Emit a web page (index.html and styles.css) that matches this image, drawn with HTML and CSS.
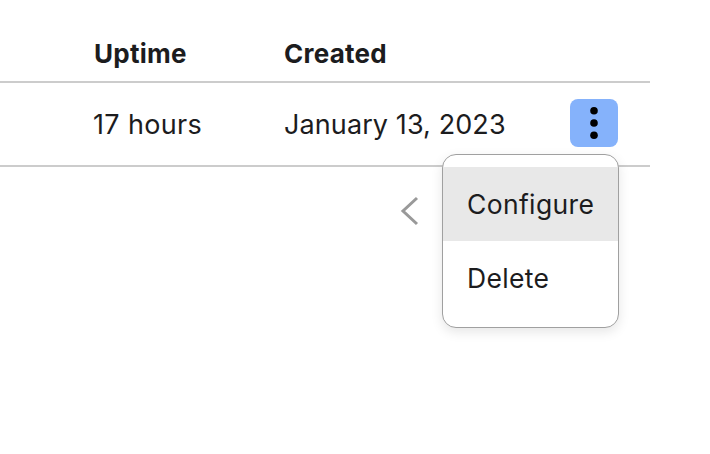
FILE: index.html
```html
<!DOCTYPE html>
<html lang="en">
<head>
<meta charset="utf-8">
<title>Instances</title>
<link rel="stylesheet" href="styles.css">
</head>
<body>
<div class="table">
  <div class="row head">
    <div class="col-uptime">Uptime</div>
    <div class="col-created">Created</div>
  </div>
  <div class="row body-row">
    <div class="col-uptime">17 hours</div>
    <div class="col-created">January 13, 2023</div>
    <div class="col-actions">
      <button class="kebab" aria-label="Actions">
        <svg width="10" height="34" viewBox="0 0 10 34"><circle cx="5" cy="4.7" r="3.8"/><circle cx="5" cy="17" r="3.8"/><circle cx="5" cy="29.3" r="3.8"/></svg>
      </button>
      <div class="menu">
        <div class="item active">Configure</div>
        <div class="item">Delete</div>
      </div>
    </div>
  </div>
  <div class="pager">
    <svg width="20" height="30" viewBox="0 0 20 30"><path d="M17 2 L3 15 L17 28" fill="none" stroke="#999" stroke-width="3"/></svg>
  </div>
</div>
</body>
</html>
```
FILE: styles.css
```css
html, body { margin: 0; padding: 0; background: #fff; }
body { font-family: Inter, "Liberation Sans", sans-serif; color: #1c1c1e; font-size: 27px; letter-spacing: .1px; overflow: hidden; height: 454px; }
.table { width: 650px; padding-top: 39px; }
.row { display: flex; align-items: center; border-bottom: 2px solid #ccc; box-sizing: border-box; }
.head { height: 44px; font-weight: 700; font-size: 26px; letter-spacing: .25px; line-height: 30px; align-items: flex-start; }
.body-row { height: 84px; }
.col-uptime { width: 190px; margin-left: 94px; }
.body-row .col-uptime { text-indent: -1px; letter-spacing: .35px; }
.col-created { width: 286px; }
.col-actions { position: relative; width: 48px; height: 48px; margin-top: -2px; }
.kebab { width: 48px; height: 48px; padding: 0; border: 0; border-radius: 8px; background: #85b2fb; display: flex; align-items: center; justify-content: center; }
.menu { position: absolute; right: -1px; top: 55px; width: 177px; height: 174px; background: #fff; border: 1px solid #a0a0a0; border-radius: 14px; box-shadow: 0 4px 12px rgba(0,0,0,.1); padding: 12px 0; box-sizing: border-box; z-index: 2; font-size: 26.5px; letter-spacing: .35px; }
.item { height: 74px; line-height: 74px; padding-left: 24px; }
.active { background: #e8e8e8; }
.pager { display: flex; justify-content: flex-end; padding: 29px 230px 0 0; }
```
